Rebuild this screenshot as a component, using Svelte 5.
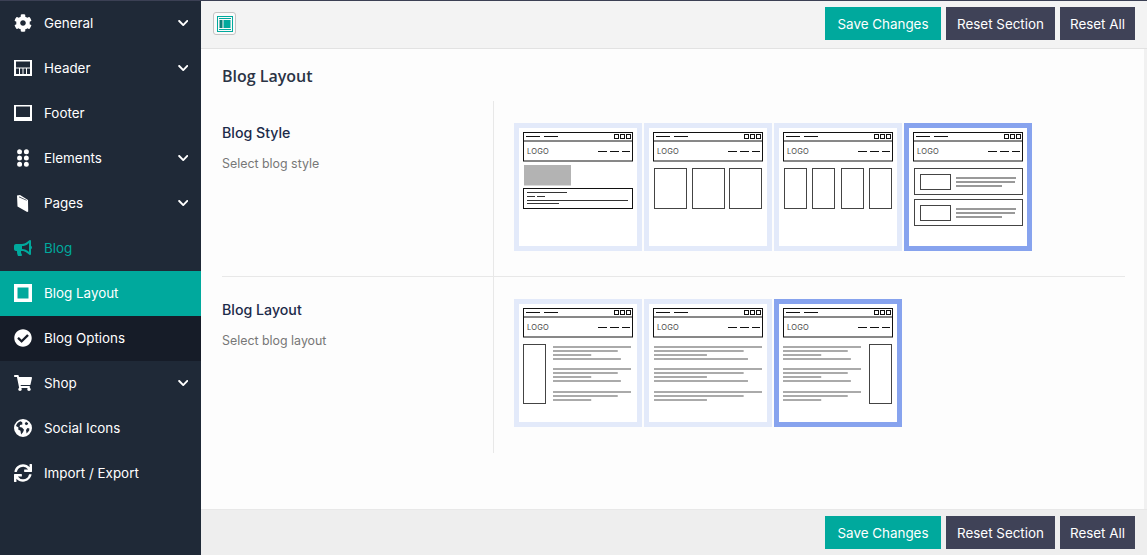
<script lang="ts">
  const ICONS = {
    gear: { box: "0 0 512 512", d: "M487.4 315.7l-42.6-24.6c4.3-23.2 4.3-47 0-70.2l42.6-24.6c4.9-2.8 7.1-8.6 5.5-14-11.1-35.6-30-67.8-54.7-94.6-3.8-4.1-10-5.1-14.8-2.3L380.8 110c-17.9-15.4-38.5-27.3-60.8-35.1V25.8c0-5.6-3.9-10.5-9.4-11.7-36.7-8.2-74.3-7.8-109.2 0-5.5 1.2-9.4 6.1-9.4 11.7V75c-22.2 7.9-42.8 19.8-60.8 35.1L88.7 85.5c-4.9-2.8-11-1.9-14.8 2.3-24.7 26.7-43.6 58.9-54.7 94.6-1.7 5.4.6 11.2 5.5 14L67.3 221c-4.3 23.2-4.3 47 0 70.2l-42.6 24.6c-4.9 2.8-7.1 8.6-5.5 14 11.1 35.6 30 67.8 54.7 94.6 3.8 4.1 10 5.1 14.8 2.3l42.6-24.6c17.9 15.4 38.5 27.3 60.8 35.1v49.2c0 5.6 3.9 10.5 9.4 11.7 36.7 8.2 74.3 7.8 109.2 0 5.5-1.2 9.4-6.1 9.4-11.7v-49.2c22.2-7.9 42.8-19.8 60.8-35.1l42.6 24.6c4.9 2.8 11 1.9 14.8-2.3 24.7-26.7 43.6-58.9 54.7-94.6 1.5-5.5-.7-11.3-5.6-14.1zM256 336c-44.1 0-80-35.9-80-80s35.9-80 80-80 80 35.9 80 80-35.9 80-80 80z" },
    header: { box: "0 0 18 18", d: "M0 1h18v16H0zM2 2.500V15h14V2.500zM2 8.500h14v1H2zM5 9.500h1v5.500H5zM8.500 9.500h1v5.500h-1zM12 9.500h1v5.500h-1z" },
    footer: { box: "0 0 18 18", d: "M0 1h18v16H0zM2 2.500V13h14V2.500z" },
    dots: { box: "0 0 18 18", d: "M5.600 .2a2.500 2.500 0 1 1 0 5a2.500 2.500 0 1 1 0-5zM12.400 .2a2.500 2.500 0 1 1 0 5a2.500 2.500 0 1 1 0-5zM5.600 6.500a2.500 2.500 0 1 1 0 5a2.500 2.500 0 1 1 0-5zM12.400 6.500a2.500 2.500 0 1 1 0 5a2.500 2.500 0 1 1 0-5zM5.600 12.800a2.500 2.500 0 1 1 0 5a2.500 2.500 0 1 1 0-5zM12.400 12.800a2.500 2.500 0 1 1 0 5a2.500 2.500 0 1 1 0-5z" },
    book: { box: "0 0 18 18", d: "M3 1.500L6 1l8 5 .2 11.500-1 .5L3.500 12.500zM5 2.400L12.500 6l.3.8L5 3.300z" },
    horn: { box: "0 0 576 512", d: "M576 240c0-23.63-12.95-44.04-32-55.12V32.01C544 23.26 537.02 0 512 0c-7.12 0-14.19 2.38-19.98 7.02l-85.03 68.03C364.28 109.19 310.66 128 256 128H64c-35.35 0-64 28.65-64 64v96c0 35.35 28.65 64 64 64h33.7c-1.39 10.48-2.18 21.14-2.18 32 0 39.77 9.26 77.35 25.56 110.94 5.19 10.69 16.52 17.06 28.4 17.06h74.28c26.05 0 41.69-29.84 25.9-50.56-16.4-21.52-26.15-48.36-26.15-77.44 0-11.11 1.62-21.79 4.41-32H256c54.66 0 108.28 18.81 150.98 52.95l85.03 68.03a32.023 32.023 0 0 0 19.98 7.02c24.92 0 32-22.78 32-32V295.13C563.05 284.04 576 263.63 576 240zm-96 141.42l-33.05-26.44C392.95 311.78 325.12 288 256 288v-96c69.12 0 136.95-23.78 190.95-66.98L480 98.58v282.84z" },
    square: { box: "0 0 18 18", d: "M0 0h18v18H0zM3.500 3.500v11h11v-11z" },
    check: { box: "0 0 512 512", d: "M504 256c0 136.967-111.033 248-248 248S8 392.967 8 256 119.033 8 256 8s248 111.033 248 248zM227.314 387.314l184-184c6.248-6.248 6.248-16.379 0-22.627l-22.627-22.627c-6.248-6.249-16.379-6.249-22.628 0L216 308.118l-70.059-70.059c-6.248-6.248-16.379-6.248-22.628 0l-22.627 22.627c-6.248 6.248-6.248 16.379 0 22.627l104 104c6.249 6.249 16.379 6.249 22.628.001z" },
    cart: { box: "0 0 576 512", d: "M528.12 301.319l47.273-208C578.806 78.301 567.391 64 551.99 64H159.208l-9.166-44.81C147.758 8.021 137.93 0 126.529 0H24C10.745 0 0 10.745 0 24v16c0 13.255 10.745 24 24 24h69.883l70.248 343.435C147.325 417.1 136 435.222 136 456c0 30.928 25.072 56 56 56s56-25.072 56-56c0-15.674-6.447-29.835-16.824-40h209.647C430.447 426.165 424 440.326 424 456c0 30.928 25.072 56 56 56s56-25.072 56-56c0-22.172-12.888-41.332-31.579-50.405l5.517-24.276c3.413-15.018-8.002-29.319-23.403-29.319H218.117l-6.545-32h293.145c11.206 0 20.92-7.754 23.403-18.681z" },
    globe: { box: "0 0 18 18", d: "M9 0a9 9 0 1 1 0 18A9 9 0 1 1 9 0zM6.500 2.200C4.300 3 2.600 4.800 2 7l2.500 1.600L4.200 10.500l2.300 1.300.6 3.600 1.900-2.200 1-2.500L8 8.400 5.600 8 6 6l2.400-.6L8.200 3.300zM12 2.800l-1.300 2 1.300 1.500 1.700-.8.500-1.300zM13.500 9l-1.500 2 .6 3.500 2.500-2.800.3-2.200z" },
    sync: { box: "0 0 512 512", d: "M440.65 12.57l4 82.77A247.16 247.16 0 0 0 255.83 8C134.73 8 33.91 94.92 12.29 209.82A12 12 0 0 0 24.09 224h49.05a12 12 0 0 0 11.67-9.26 175.91 175.91 0 0 1 317-56.94l-101.46-4.86a12 12 0 0 0-12.57 12v47.41a12 12 0 0 0 12 12H500a12 12 0 0 0 12-12V12a12 12 0 0 0-12-12h-47.37a12 12 0 0 0-11.98 12.57zM255.83 432a175.61 175.61 0 0 1-146-77.8l101.8 4.87a12 12 0 0 0 12.57-12v-47.4a12 12 0 0 0-12-12H12a12 12 0 0 0-12 12V500a12 12 0 0 0 12 12h47.35a12 12 0 0 0 12-12.6l-4.15-82.57A247.17 247.17 0 0 0 255.83 504c121.11 0 221.93-86.92 243.55-201.82a12 12 0 0 0-11.8-14.18h-49.05a12 12 0 0 0-11.67 9.26A175.86 175.86 0 0 1 255.83 432z" }
  };

  const menu = [
    { label: "General", icon: "gear", arrow: true },
    { label: "Header", icon: "header", arrow: true },
    { label: "Footer", icon: "footer" },
    { label: "Elements", icon: "dots", arrow: true },
    { label: "Pages", icon: "book", arrow: true },
    { label: "Blog", icon: "horn", state: "open" },
    { label: "Blog Layout", icon: "square", state: "active" },
    { label: "Blog Options", icon: "check", state: "sub" },
    { label: "Shop", icon: "cart", arrow: true },
    { label: "Social Icons", icon: "globe" },
    { label: "Import / Export", icon: "sync" }
  ];

  const para = [0, 4, 8, 12, 22, 26, 30, 34, 45, 49, 53];
  const paraW = [1, 0.83, 0.49, 0.87, 1, 0.83, 0.49, 0.87, 1, 0.83, 0.49];
</script>

{#snippet top()}
  <rect x="4.500" y="4.500" width="109" height="28.500" fill="#fff" stroke="#111" />
  <path d="M4.500 13h109" stroke="#111" fill="none" />
  <path d="M7 8.500h14M25 8.500h14" stroke="#111" fill="none" />
  <rect x="95.500" y="6.500" width="4" height="4" fill="none" stroke="#111" />
  <rect x="101.500" y="6.500" width="4" height="4" fill="none" stroke="#111" />
  <rect x="107.500" y="6.500" width="4" height="4" fill="none" stroke="#111" />
  <text x="8" y="25.700" class="logo">LOGO</text>
  <path d="M79 23.500h9M91 23.500h9M103 23.500h8" stroke="#111" fill="none" />
{/snippet}

{#snippet lines(x: number, y: number, w: number)}
  {#each para as dy, i}
    <rect x={x} y={y + dy} width={w * paraW[i]} height="2" fill="#aaa" />
  {/each}
{/snippet}

{#snippet thumb(kind: string, selected: boolean)}
  <div class="thumb" class:selected>
    <svg width="118" height="118" viewBox="0 0 118 118">
      {@render top()}
      {#if kind === "a"}
        <rect x="5" y="37" width="47" height="20.500" fill="#b3b3b3" />
        <rect x="4.500" y="60.500" width="109" height="20" fill="#fff" stroke="#111" />
        <path d="M8 64.500h40M8 68.500h8M18 68.500h8M8 72.500h101M8 75.500h32" stroke="#333" fill="none" />
      {:else if kind === "b"}
        {#each [5.500, 43.500, 80.500] as x}
          <rect x={x} y="40.500" width="32" height="40" fill="none" stroke="#444" />
        {/each}
      {:else if kind === "c"}
        {#each [5.500, 33.500, 62.500, 90.500] as x}
          <rect x={x} y="40.500" width="22" height="40" fill="none" stroke="#444" />
        {/each}
      {:else if kind === "d"}
        {#each [40.500, 71.500] as y}
          <rect x="5.500" y={y} width="108" height="26" fill="none" stroke="#444" />
          <rect x="11.500" y={y + 6} width="30" height="15" fill="none" stroke="#444" />
          <rect x="47" y={y + 8.500} width="60" height="2" fill="#999" />
          <rect x="47" y={y + 12.500} width="59" height="2" fill="#999" />
          <rect x="47" y={y + 16.500} width="46" height="2" fill="#999" />
        {/each}
      {:else if kind === "left"}
        <rect x="4.500" y="40.500" width="22" height="59" fill="none" stroke="#444" />
        {@render lines(34, 42, 78)}
      {:else if kind === "full"}
        {@render lines(5, 42, 108)}
      {:else if kind === "right"}
        <rect x="90.500" y="40.500" width="22" height="59" fill="none" stroke="#444" />
        {@render lines(4, 42, 78)}
      {/if}
    </svg>
  </div>
{/snippet}

{#snippet actions()}
  <div class="actions">
    <button class="save">Save Changes</button>
    <button class="section">Reset Section</button>
    <button class="all">Reset All</button>
  </div>
{/snippet}

<div class="page">
  <aside class="sidebar">
    {#each menu as item}
      <div class="item {item.state ?? ''}">
        <svg class="icon" viewBox={ICONS[item.icon].box}><path fill-rule="evenodd" d={ICONS[item.icon].d} /></svg>
        <span class="label">{item.label}</span>
        {#if item.arrow}
          <svg class="chev" viewBox="0 0 448 512"><path d="M207.029 381.476L12.686 187.132c-9.373-9.373-9.373-24.569 0-33.941l22.667-22.667c9.357-9.357 24.522-9.375 33.901-.04L224 284.505l154.745-154.021c9.379-9.335 24.544-9.317 33.901.04l22.667 22.667c9.373 9.373 9.373 24.569 0 33.941L240.971 381.476c-9.373 9.372-24.569 9.372-33.942 0z" /></svg>
        {/if}
      </div>
    {/each}
  </aside>

  <main class="main">
    <header class="bar top-bar">
      <div class="layout-btn">
        <svg width="16" height="16" viewBox="0 0 16 16">
          <path fill="#00a99d" fill-rule="evenodd" d="M0 0h16v16H0zM1 1v14h14V1z" />
          <rect x="2" y="2" width="12" height="1" fill="#00a99d" />
          <rect x="2" y="13" width="12" height="1" fill="#00a99d" />
          <rect x="2.500" y="4" width="3" height="8" fill="#0b7f78" />
          <rect x="6.500" y="4" width="7" height="8" fill="#00a99d" />
        </svg>
      </div>
      {@render actions()}
    </header>

    <section class="content">
      <h2>Blog Layout</h2>
      <div class="row">
        <div class="info">
          <h3>Blog Style</h3>
          <p>Select blog style</p>
        </div>
        <div class="options">
          {@render thumb("a", false)}
          {@render thumb("b", false)}
          {@render thumb("c", false)}
          {@render thumb("d", true)}
        </div>
      </div>
      <div class="row">
        <div class="info">
          <h3>Blog Layout</h3>
          <p>Select blog layout</p>
        </div>
        <div class="options">
          {@render thumb("left", false)}
          {@render thumb("full", false)}
          {@render thumb("right", true)}
        </div>
      </div>
    </section>

    <footer class="bar bottom-bar">
      {@render actions()}
    </footer>
  </main>
</div>

<style>
  :global(body) { margin: 0; overflow: hidden; }
  .page {
    display: flex;
    height: 555px;
    width: 1147px;
    font-family: Inter, "Open Sans", sans-serif;
    background: #f1f1f1;
    border-top: 1px solid #3b4054;
    box-sizing: border-box;
  }

  .sidebar { width: 201px; flex: none; background: #1f2937; }
  .item {
    display: flex;
    align-items: center;
    height: 45px;
    padding: 0 13px 1px 14px;
    box-sizing: border-box;
    color: #fff;
    font-size: 13.4px;
  }
  .item .icon { width: 18px; height: 18px; fill: #fff; flex: none; }
  .item .label { margin-left: 12px; flex: 1; }
  .item .chev { width: 10.500px; height: 12px; fill: #fff; }
  .item.open { color: #00a99d; }
  .item.open .icon { fill: #00a99d; }
  .item.active { background: #00a99d; }
  .item.sub { background: #161c28; }

  .main { flex: 1; display: flex; flex-direction: column; min-width: 0; }
  .bar { display: flex; align-items: center; justify-content: space-between; flex: none; background: #f3f3f3; }
  .top-bar { height: 45px; border-bottom: 1px solid #e2e2e2; padding: 0 12px 2px 12px; box-sizing: content-box; }
  .bottom-bar { height: 46px; justify-content: flex-end; padding: 0 12px; background: #eee; border-top: 1px solid #e8e8e8; box-sizing: border-box; }
  .layout-btn {
    display: flex;
    align-items: center;
    justify-content: center;
    width: 21px;
    height: 21px;
    background: #fafafa;
    border: 1px solid #c4c4c4;
    border-radius: 3px;
  }
  .actions { display: flex; gap: 5px; }
  button {
    height: 33px;
    padding: 0;
    border: 0;
    background: #3f4257;
    color: #fff;
    font: 13.4px Inter, "Open Sans", sans-serif;
  }
  button.save { background: #00a99d; width: 116px; }
  button.section { width: 109px; }
  button.all { width: 75px; }

  .content { flex: 1; background: #fdfdfd; margin-right: 3px; padding: 0 19px 0 21px; }
  h2 {
    margin: 0;
    height: 52px;
    font: 600 16px/55px "Open Sans", sans-serif;
    color: #2b3445;
  }
  .row { display: flex; }
  .row + .row { border-top: 1px solid #e8e8e8; }
  .info { width: 271px; flex: none; padding-top: 22px; box-sizing: border-box; }
  .row + .row .info { padding-top: 23px; }
  h3 { margin: 0; font-size: 14.2px; font-weight: 500; line-height: 20px; color: #1c2b4a; }
  p { margin: 11px 0 0; font-size: 12.400px; line-height: 20px; color: #777; }
  .options {
    flex: 1;
    display: flex;
    gap: 2px;
    padding: 22px 20px 25px;
    border-left: 1px solid #e8e8e8;
  }
  .row + .row .options { padding-bottom: 26px; }
  .thumb { width: 118px; height: 118px; border: 5px solid #e3eafa; background: #fff; }
  .thumb.selected { border-color: #87a3ee; }
  .thumb svg { display: block; }
  .logo { font: 7.500px Inter, sans-serif; fill: #444; letter-spacing: 0.2px; }
</style>
